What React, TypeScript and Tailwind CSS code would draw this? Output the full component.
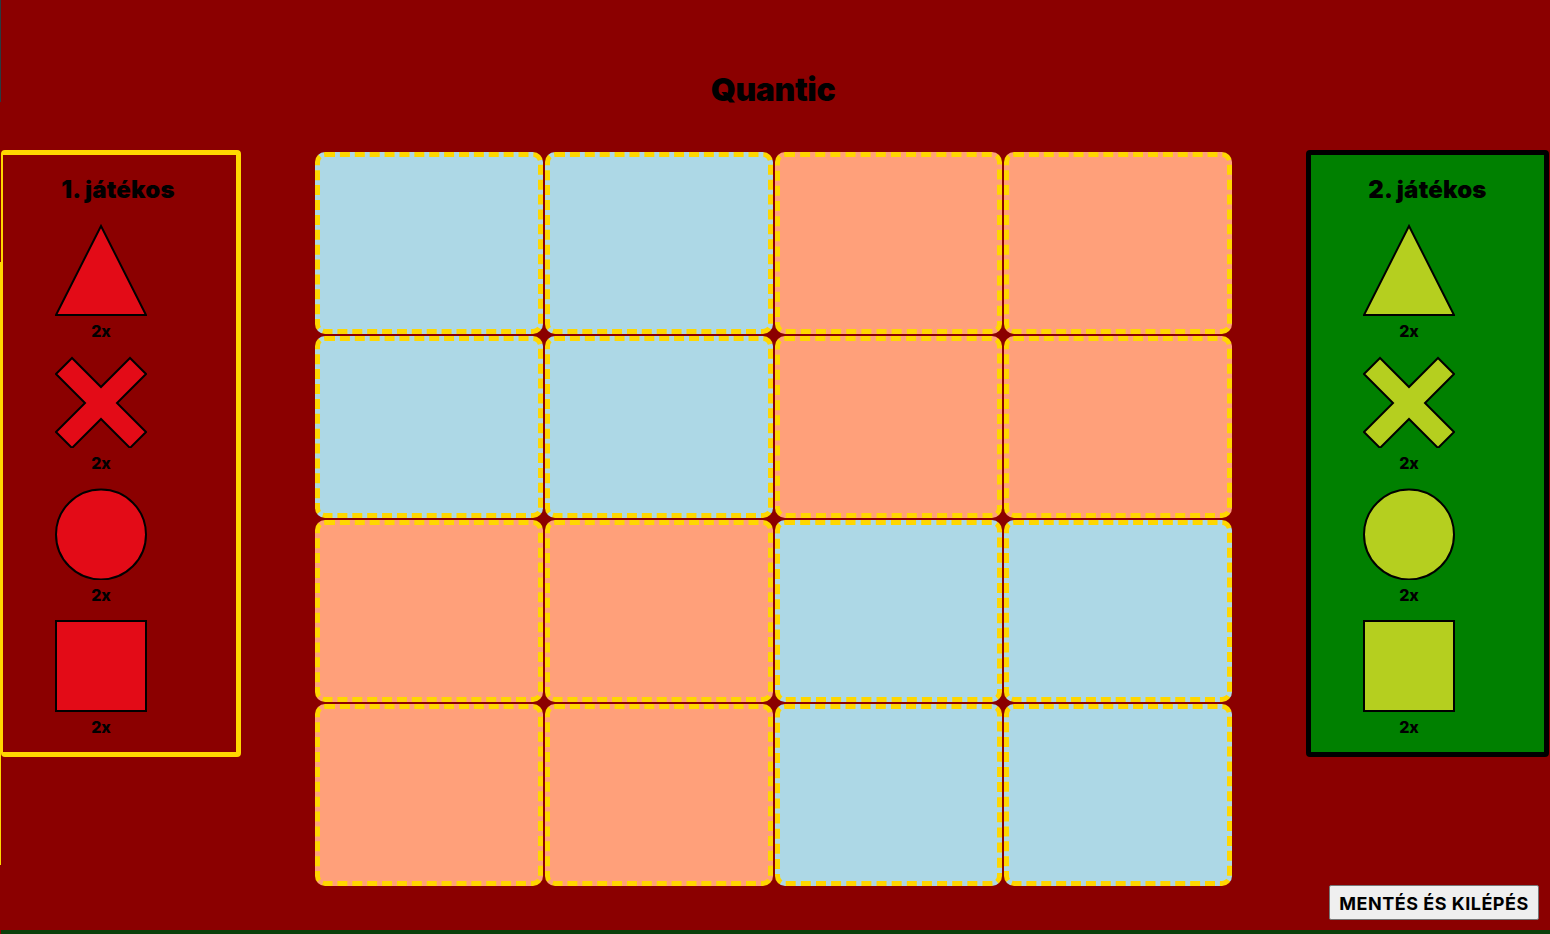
const FONT = "font-['Inter','Liberation_Sans',sans-serif]";

const colors = ["b", "b", "o", "o", "b", "b", "o", "o", "o", "o", "b", "b", "o", "o", "b", "b"];

function Shape({ kind, fill }: { kind: "t" | "x" | "c" | "s"; fill: string }) {
  return (
    <svg viewBox="0 0 92 92" className="w-[92px] h-[92px] block">
      {kind === "t" && <polygon points="46,2 91,91 1,91" fill={fill} stroke="#000" strokeWidth="2" />}
      {kind === "x" && (
        <polygon
          points="17,2 1,18 30,47 1,76 17,92 46,63 75,92 91,76 62,47 91,18 75,2 46,31"
          fill={fill}
          stroke="#000"
          strokeWidth="2"
        />
      )}
      {kind === "c" && <circle cx="46" cy="46.5" r="45" fill={fill} stroke="#000" strokeWidth="2" />}
      {kind === "s" && <rect x="1" y="1" width="90" height="90" fill={fill} stroke="#000" strokeWidth="2" />}
    </svg>
  );
}

function Player({
  title,
  fill,
  className,
  titleClass,
}: {
  title: string;
  fill: string;
  className: string;
  titleClass: string;
}) {
  return (
    <div className={`h-[607px] rounded-[4px] pt-[21px] ${className}`}>
      <h2 className={`text-center text-[24px] leading-[27px] font-black text-black tracking-[0.2px] ${titleClass}`}>
        {title}
      </h2>
      <div className="flex flex-col mt-[21px]">
        {(["t", "x", "c", "s"] as const).map((k) => (
          <div key={k} className="h-[132px] w-[92px] ml-[52px] flex flex-col items-center">
            <Shape kind={k} fill={fill} />
            <span className="text-[16px] leading-[16px] font-extrabold text-black mt-[7px]">2x</span>
          </div>
        ))}
      </div>
    </div>
  );
}

export default function App() {
  return (
    <div className={`relative w-[1550px] h-[934px] overflow-hidden bg-[#8b0000] ${FONT}`}>
      <div className="absolute left-0 top-0 w-px h-[102px] bg-[#2a3a40]" />
      <div className="absolute left-0 top-[262px] w-px h-[603px] bg-[#ffd700]" />
      <div className="absolute left-px right-0 bottom-0 h-[4px] bg-[#0b400b]" />

      <h1 className="h-[150px] pt-[72px] pr-[4px] text-center text-[32px] leading-[36px] font-black text-black tracking-[-0.4px]">
        Quantic
      </h1>

      <div className="flex items-start pl-px">
        <Player
          title="1. játékos"
          fill="#e30b17"
          titleClass="pr-[3px]"
          className="w-[240px] border-y-[5px] border-r-[5px] border-l-[2px] border-[#ffd700] bg-[#8b0000]"
        />
        <div className="ml-[74px] mt-[2px] grid grid-cols-[228px_228px_227px_228px] auto-rows-[182px] gap-[2px]">
          {colors.map((c, i) => (
            <div
              key={i}
              className={`rounded-[10px] border-[5px] border-dashed border-[#ffd700] ${
                c === "b" ? "bg-[#add8e6]" : "bg-[#ffa07a]"
              }`}
            />
          ))}
        </div>
        <Player
          title="2. játékos"
          fill="#b5cf1f"
          titleClass=""
          className="ml-[74px] w-[243px] border-[5px] border-black bg-[#008000]"
        />
      </div>

      <button className="absolute left-[1329px] top-[885px] w-[210px] h-[35px] pt-px rounded-[2px] border border-[#767676] bg-[#efefef] text-black text-[18px] font-bold tracking-[0.5px]">
        MENTÉS ÉS KILÉPÉS
      </button>
    </div>
  );
}
